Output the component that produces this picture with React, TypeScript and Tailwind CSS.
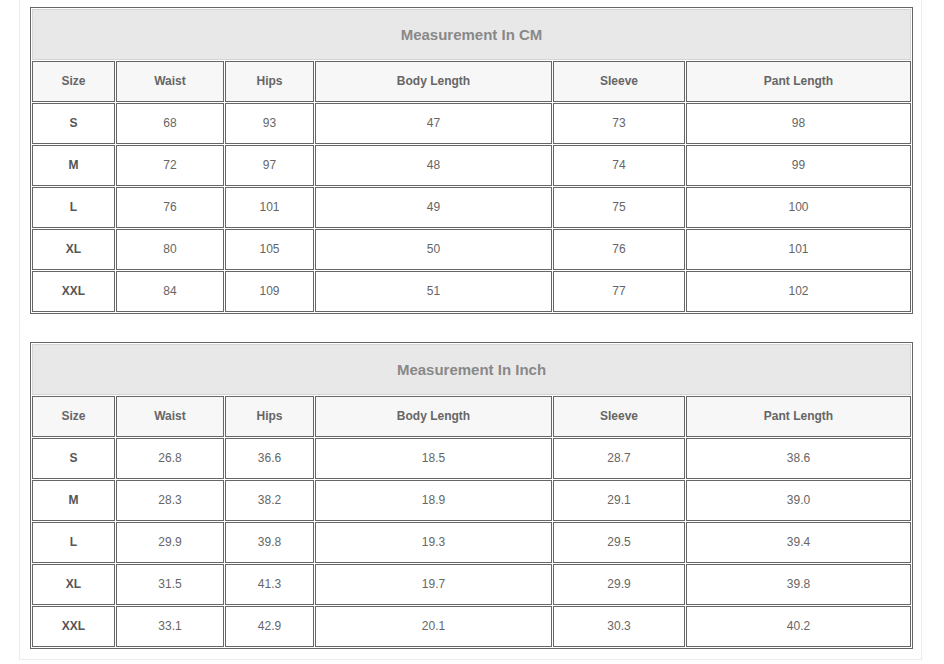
import React from 'react';

const headers = ['Size', 'Waist', 'Hips', 'Body Length', 'Sleeve', 'Pant Length'];

const cmRows = [
  ['S', '68', '93', '47', '73', '98'],
  ['M', '72', '97', '48', '74', '99'],
  ['L', '76', '101', '49', '75', '100'],
  ['XL', '80', '105', '50', '76', '101'],
  ['XXL', '84', '109', '51', '77', '102'],
];

const inchRows = [
  ['S', '26.8', '36.6', '18.5', '28.7', '38.6'],
  ['M', '28.3', '38.2', '18.9', '29.1', '39.0'],
  ['L', '29.9', '39.8', '19.3', '29.5', '39.4'],
  ['XL', '31.5', '41.3', '19.7', '29.9', '39.8'],
  ['XXL', '33.1', '42.9', '20.1', '30.3', '40.2'],
];

const SizeTable: React.FC<{ title: string; rows: string[][] }> = ({ title, rows }) => {
  return (
    <div className="grid w-[883px] grid-cols-[83px_108px_89px_237px_132px_225px] gap-px border border-[#666] bg-white p-px">
      {/* title row */}
      <div className="col-span-6 flex h-[51px] items-center justify-center border border-[#d4d4d4] bg-[#e8e8e8] pt-[2px] text-[15px] font-bold text-[#888]">
        {title}
      </div>

      {headers.map((h) => (
        <div
          key={h}
          className="flex h-[41px] items-center justify-center border border-[#666] bg-[#f7f7f7] pb-[2px] text-[12px] font-bold text-[#666]"
        >
          {h}
        </div>
      ))}

      {rows.map((row) =>
        row.map((cell, i) => (
          <div
            key={row[0] + i}
            className={
              i === 0
                ? 'flex h-[41px] items-center justify-center border border-[#666] bg-white pb-[2px] text-[12px] font-bold text-[#555]'
                : 'flex h-[41px] items-center justify-center border border-[#666] bg-white pb-[2px] text-[12px] text-[#666]'
            }
          >
            {cell}
          </div>
        ))
      )}
    </div>
  );
};

const App: React.FC = () => {
  return (
    <div className="min-h-[664px] bg-white font-['Liberation_Sans',Arial,sans-serif]">
      <div className="ml-[19px] flex w-[903px] flex-col gap-[28px] border-x border-b border-[#ececec] pb-[10px] pl-[10px] pt-[7px]">
        <SizeTable title="Measurement In CM" rows={cmRows} />
        <SizeTable title="Measurement In Inch" rows={inchRows} />
      </div>
    </div>
  );
};

export default App;
